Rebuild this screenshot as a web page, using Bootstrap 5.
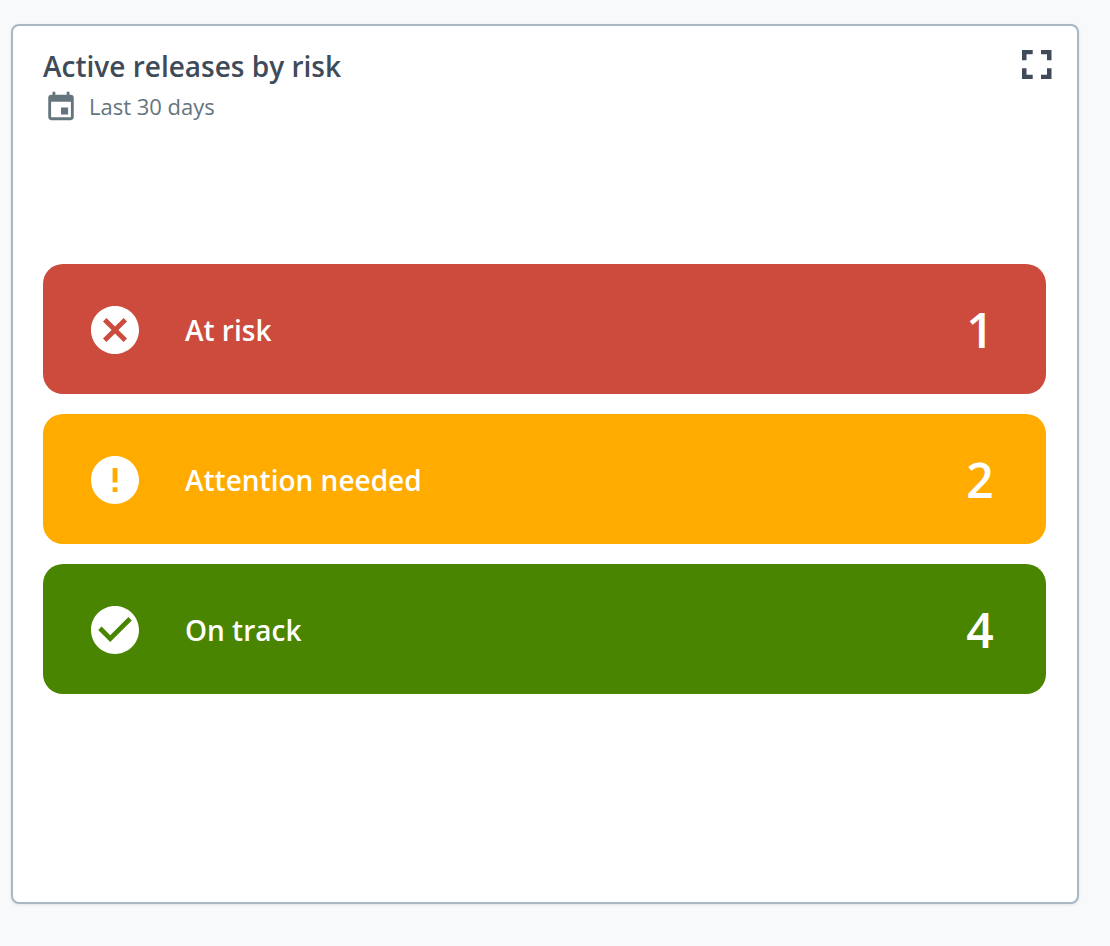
<!DOCTYPE html>
<html lang="en">
<head>
<meta charset="utf-8">
<meta name="viewport" content="width=device-width, initial-scale=1">
<title>Active releases by risk</title>
<link href="https://cdn.jsdelivr.net/npm/bootstrap@5.3.0/dist/css/bootstrap.min.css" rel="stylesheet">
<style>
  body { background: #f8f9fb; font-family: "Open Sans", "Noto Sans", sans-serif; }
  .page { padding: 24px 31px 42px 11px; }
  .risk-card { border: 2px solid #a9b7c2; border-radius: 8px; padding: 20px 25px 20px 30px; box-shadow: 0 1px 3px rgba(60, 75, 90, .12); }
  .risk-title { font-size: 28px; line-height: 40px; font-weight: 600; color: #404b5a; }
  .risk-period { font-size: 22px; line-height: 40px; gap: 11px; padding-left: 1px; color: #65757e; }
  .expand-btn { color: #404b5a; line-height: 0; }
  .risk-list { gap: 20px; margin-right: 6px; padding-bottom: 50px; }
  .risk-row { height: 130px; border-radius: 20px; padding: 2px 52px 0 48px; font-size: 28px; font-weight: 600; }
  .risk-row svg { margin-right: 46px; }
  .risk-count { font-size: 48px; min-width: 28px; }
  .bad { background: #cc4b3d; }
  .warn { background: #ffab00; }
  .good { background: #498500; }
</style>
</head>
<body>
<main class="page min-vh-100 d-flex">
  <section class="risk-card bg-white flex-grow-1 d-flex flex-column">
    <header class="d-flex justify-content-between align-items-start">
      <div>
        <h1 class="risk-title mb-0">Active releases by risk</h1>
        <div class="risk-period d-flex align-items-center">
          <svg width="34" height="34" viewBox="0 -1 24 24" fill="currentColor" aria-hidden="true"><path d="M17 12h-5v5h5v-5zM16 1v2H8V1H6v2H5c-1.110 0-1.990.9-1.990 2L3 19c0 1.100.89 2 2 2h14c1.100 0 2-.9 2-2V5c0-1.100-.9-2-2-2h-1V1h-2zm3 18H5V8h14v11z"/></svg>
          <span>Last 30 days</span>
        </div>
      </div>
      <button type="button" class="expand-btn btn p-0 border-0" aria-label="Full screen">
        <svg width="30" height="38" viewBox="0 0 30 38" fill="currentColor" aria-hidden="true"><path d="M0 4H10.700V8.300H4.500V14.300H0ZM19 4H29.500V14.300H25V8.300H19ZM25 22.300H29.500V33H19V28.700H25ZM0 22.300H4.500V28.700H10.700V33H0Z"/></svg>
      </button>
    </header>
    <ul class="risk-list list-unstyled mb-0 flex-grow-1 d-flex flex-column justify-content-center">
      <li class="risk-row bad d-flex align-items-center text-white">
        <svg width="48" height="48" viewBox="2 2 20 20" fill="currentColor" aria-hidden="true"><path d="M12 2C6.470 2 2 6.470 2 12s4.470 10 10 10 10-4.470 10-10S17.530 2 12 2zm5 13.590L15.590 17 12 13.410 8.410 17 7 15.590 10.590 12 7 8.410 8.410 7 12 10.590 15.590 7 17 8.410 13.410 12 17 15.590z"/></svg>
        <span>At risk</span><span class="risk-count ms-auto text-center">1</span>
      </li>
      <li class="risk-row warn d-flex align-items-center text-white">
        <svg width="48" height="48" viewBox="2 2 20 20" fill="currentColor" aria-hidden="true"><path d="M12 2C6.480 2 2 6.480 2 12s4.480 10 10 10 10-4.480 10-10S17.520 2 12 2zm1 15h-2v-2h2v2zm0-4h-2V7h2v6z"/></svg>
        <span>Attention needed</span><span class="risk-count ms-auto text-center">2</span>
      </li>
      <li class="risk-row good d-flex align-items-center text-white">
        <svg width="48" height="48" viewBox="2 2 20 20" fill="currentColor" aria-hidden="true"><path d="M12 2C6.480 2 2 6.480 2 12s4.480 10 10 10 10-4.480 10-10S17.520 2 12 2zm-2 15l-5-5 1.410-1.410L10 14.170l7.590-7.590L19 8l-9 9z"/></svg>
        <span>On track</span><span class="risk-count ms-auto text-center">4</span>
      </li>
    </ul>
  </section>
</main>
<script src="https://cdn.jsdelivr.net/npm/bootstrap@5.3.0/dist/js/bootstrap.bundle.min.js"></script>
</body>
</html>
